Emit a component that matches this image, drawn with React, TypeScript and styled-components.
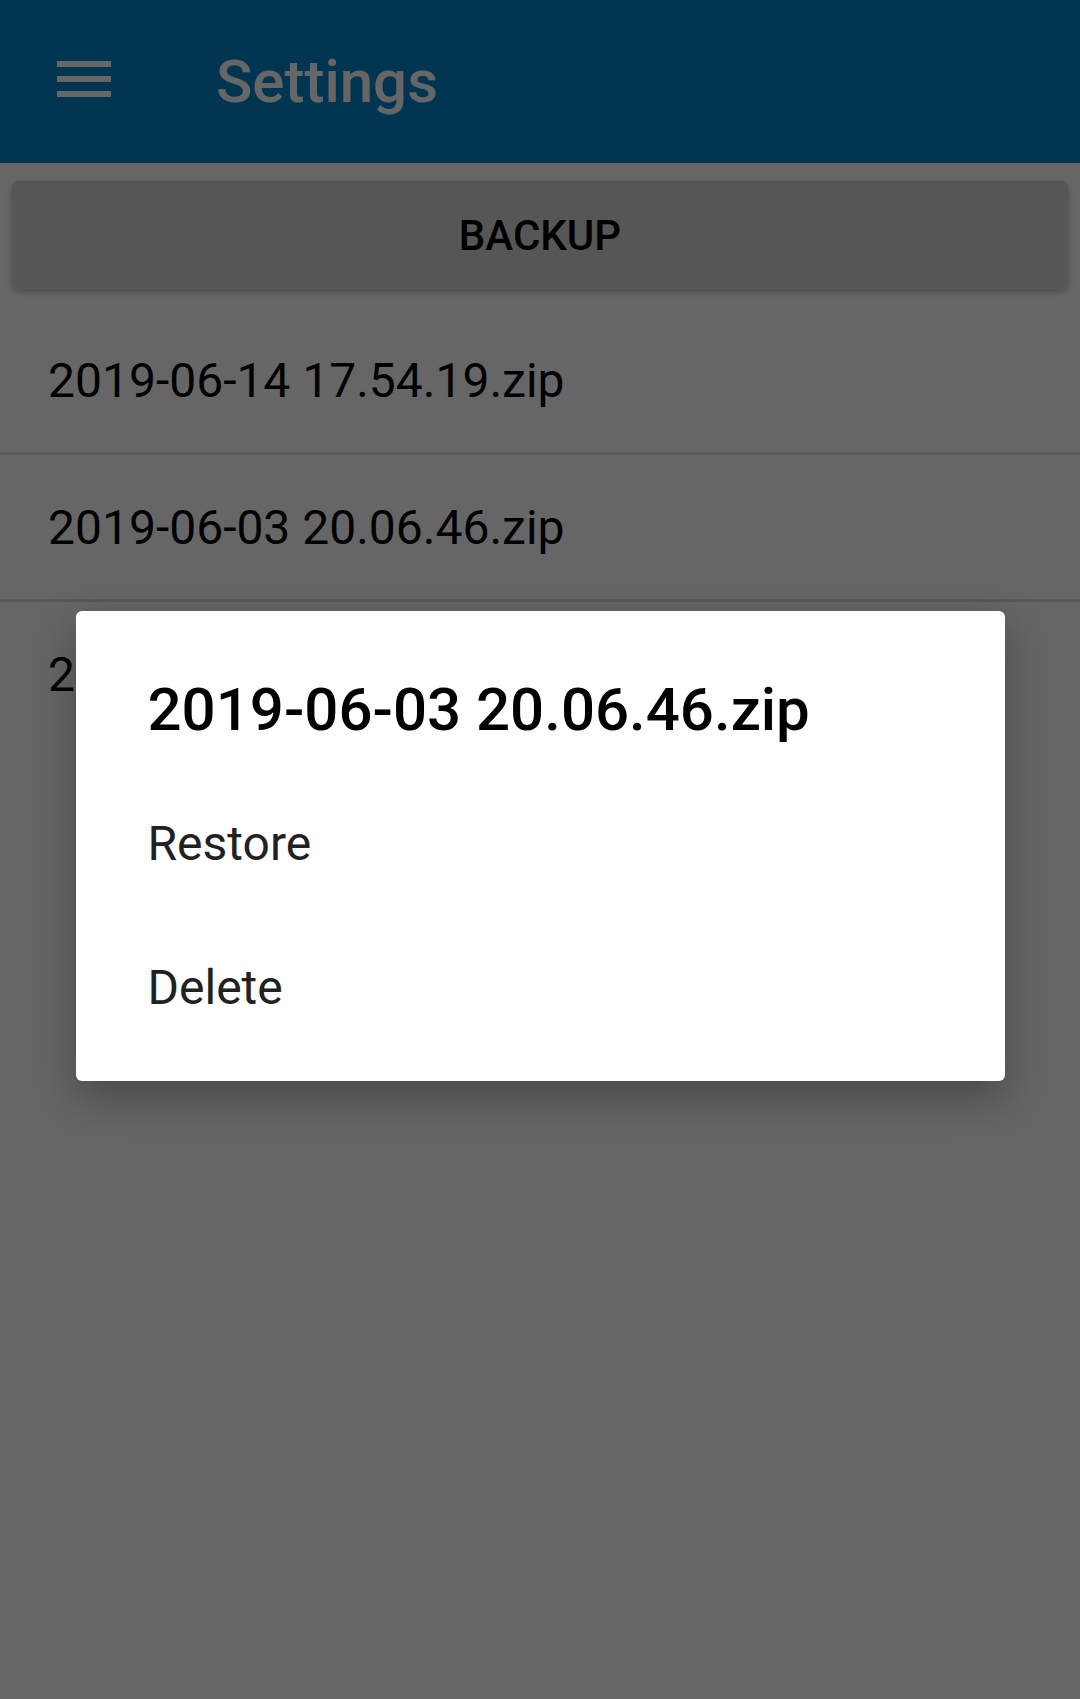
import React from "react";
import styled, { createGlobalStyle } from "styled-components";

const GlobalStyle = createGlobalStyle`
  html, body {
    margin: 0;
    padding: 0;
    background: #ffffff;
  }
  body {
    font-family: Roboto, "Noto Sans", "Liberation Sans", sans-serif;
  }
`;

const Page = styled.div`
  position: relative;
  min-height: 1699px;
  background: #ffffff;
  overflow: hidden;
`;

const AppBar = styled.header`
  height: 163px;
  background: #0085ce;
  display: flex;
  align-items: center;
  padding-left: 57px;
`;

const MenuIcon = styled.svg`
  width: 54px;
  height: 36px;
  margin-top: -5px;
  flex-shrink: 0;
`;

const Title = styled.h1`
  margin: 0 0 0 105px;
  font-size: 60px;
  font-weight: 500;
  color: #ffffff;
`;

const ButtonBar = styled.div`
  padding: 18px 12px 19px;
`;

const BackupButton = styled.button`
  display: block;
  width: 100%;
  height: 108px;
  border: none;
  border-radius: 6px;
  background: #d6d6d6;
  box-shadow: 0 3px 6px rgba(0, 0, 0, 0.25);
  font-family: inherit;
  font-size: 42px;
  font-weight: 500;
  color: #000000;
`;

const FileList = styled.ul`
  margin: 0;
  padding: 0;
  list-style: none;
`;

const FileRow = styled.li<{ $last?: boolean }>`
  height: 144px;
  display: flex;
  align-items: center;
  padding-left: 48px;
  font-size: 48px;
  color: #000000;
  border-bottom: ${(p) => (p.$last ? "none" : "3px solid #dfdfdf")};
`;

const Scrim = styled.div`
  position: absolute;
  inset: 0;
  background: rgba(0, 0, 0, 0.6);
  display: flex;
  align-items: center;
  justify-content: center;
`;

const Dialog = styled.div`
  width: 929px;
  margin-bottom: 7px;
  padding: 64px 0 22px;
  box-sizing: border-box;
  background: #ffffff;
  border-radius: 6px;
  box-shadow: 0 16px 44px rgba(0, 0, 0, 0.3);
`;

const DialogTitle = styled.h2`
  margin: 0;
  padding: 0 72px;
  font-size: 60px;
  line-height: 70px;
  font-weight: 500;
  color: #000000;
`;

const Options = styled.div`
  margin-top: 26px;
`;

const Option = styled.div`
  height: 144px;
  display: flex;
  align-items: center;
  padding: 0 72px;
  font-size: 48px;
  color: #212121;
`;

const files = [
  "2019-06-14 17.54.19.zip",
  "2019-06-03 20.06.46.zip",
  "2019-06-01 11.12.03.zip",
];

export default function App() {
  return (
    <Page>
      <GlobalStyle />
      <AppBar>
        <MenuIcon viewBox="0 0 54 36">
          <rect x="0" y="0" width="54" height="6" fill="#ffffff" />
          <rect x="0" y="15" width="54" height="6" fill="#ffffff" />
          <rect x="0" y="30" width="54" height="6" fill="#ffffff" />
        </MenuIcon>
        <Title>Settings</Title>
      </AppBar>
      <ButtonBar>
        <BackupButton>BACKUP</BackupButton>
      </ButtonBar>
      <FileList>
        {files.map((name, i) => (
          <FileRow key={name} $last={i === files.length - 1}>
            {name}
          </FileRow>
        ))}
      </FileList>
      <Scrim>
        <Dialog>
          <DialogTitle>2019-06-03 20.06.46.zip</DialogTitle>
          <Options>
            <Option>Restore</Option>
            <Option>Delete</Option>
          </Options>
        </Dialog>
      </Scrim>
    </Page>
  );
}
